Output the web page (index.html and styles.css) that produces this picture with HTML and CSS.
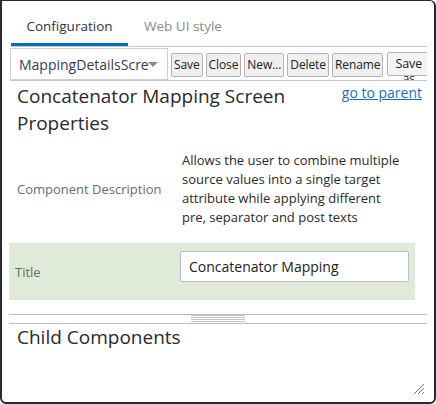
FILE: index.html
```html
<!DOCTYPE html>
<html>
<head>
<meta charset="utf-8">
<link rel="stylesheet" href="styles.css">
</head>
<body>
<div class="window">
  <div class="tabs">
    <div class="tab active">Configuration</div>
    <div class="tab">Web UI style</div>
  </div>
  <div class="toolbar">
    <div class="select">
      <span class="select-text">MappingDetailsScreen</span>
      <span class="select-arrow"></span>
    </div>
    <button class="btn">Save</button>
    <button class="btn">Close</button>
    <button class="btn">New...</button>
    <button class="btn">Delete</button>
    <button class="btn">Rename</button>
    <button class="btn btn-wrap">Save as</button>
  </div>
  <div class="content">
    <a class="parent-link" href="#">go to parent</a>
    <h1 class="heading">Concatenator Mapping Screen Properties</h1>
    <div class="props">
      <div class="prop-row">
        <div class="prop-label">Component Description</div>
        <div class="prop-value">Allows the user to combine multiple source values into a single target attribute while applying different pre, separator and post texts</div>
      </div>
      <div class="prop-row highlight">
        <div class="prop-label label-title">Title</div>
        <div class="prop-value"><div class="input">Concatenator Mapping</div></div>
      </div>
    </div>
  </div>
  <div class="splitter"><div class="grip"></div></div>
  <div class="children">
    <h2 class="heading">Child Components</h2>
  </div>
  <svg class="resize" width="12" height="12" viewBox="0 0 12 12">
    <line x1="11" y1="1" x2="1" y2="11" stroke="#777" stroke-width="1"/>
    <line x1="11" y1="5" x2="5" y2="11" stroke="#777" stroke-width="1"/>
    <line x1="11" y1="9" x2="9" y2="11" stroke="#777" stroke-width="1"/>
  </svg>
</div>
</body>
</html>
```

FILE: styles.css
```css
* { box-sizing: border-box; }
html, body { margin: 0; padding: 0; background: #fff; }
body {
  font-family: "Open Sans", "Noto Sans", sans-serif;
  color: #333;
}
.window {
  position: relative;
  width: 436px;
  height: 404px;
  border: 2px solid #2b2b2b;
  border-top-width: 1px;
  border-radius: 0 6px 6px 6px;
  display: flex;
  flex-direction: column;
  overflow: hidden;
}
.tabs {
  display: flex;
  margin: 0 7px 0 9px;
  height: 46px;
  border-bottom: 1px solid #c8c8c8;
  align-items: flex-end;
}
.tab {
  font-size: 13.5px;
  color: #8a8a8a;
  padding: 0 16px;
  height: 45px;
  line-height: 51px;
  border-bottom: 3px solid transparent;
  white-space: nowrap;
}
.tab.active {
  width: 117px;
  text-align: center;
  color: #333;
  border-bottom-color: #0a6ebd;
  padding: 0;
}
.toolbar {
  display: flex;
  align-items: center;
  gap: 3px;
  margin: 1px 7px 0 8px;
  height: 33px;
  border-bottom: 1px solid #c8c8c8;
  overflow: hidden;
}
.select {
  position: relative;
  flex-shrink: 0;
  width: 158px;
  height: 32px;
  align-self: flex-start;
  border: 1px solid #cfcfcf;
  padding: 0 0 0 8px;
  display: flex;
  align-items: center;
  overflow: hidden;
}
.select-text {
  font-size: 14px;
  color: #2e3f55;
  white-space: nowrap;
  overflow: hidden;
  width: 130px;
}
.select-arrow {
  position: absolute;
  right: 9px;
  top: 13px;
  width: 0;
  height: 0;
  border-left: 5px solid transparent;
  border-right: 5px solid transparent;
  border-top: 5px solid #8a8a8a;
}
.btn {
  flex-shrink: 0;
  font-family: "Open Sans", "Noto Sans", sans-serif;
  font-size: 12px;
  letter-spacing: -0.1px;
  color: #222;
  height: 24px;
  padding: 0 2px;
  background: #efefef;
  border: 1px solid #b4b4b4;
  border-radius: 2px;
  line-height: 20px;
  white-space: nowrap;
  margin-top: 1px;
}
.btn-wrap {
  width: 43px;
  white-space: normal;
  display: flex;
  align-items: flex-start;
  justify-content: center;
  font-size: 12.5px;
  line-height: 15px;
  padding-top: 3px;
  overflow: visible;
  background: #f4f4f4;
  margin-left: 1px;
  margin-top: 0;
}
.content {
  padding: 0 8px 0 7px;
}
.parent-link {
  float: right;
  font-size: 14px;
  color: #1a6fc0;
  text-decoration: underline;
  margin-top: 3px;
  margin-right: 4px;
  line-height: 18px;
}
.heading {
  font-size: 19px;
  font-weight: normal;
  color: #2a2a2a;
  line-height: 27px;
  margin: 2px 0 0 8px;
  width: 300px;
}
.props {
  margin-top: 8px;
  margin-right: 11px;
}
.prop-row {
  display: grid;
  grid-template-columns: 171px 1fr;
  align-items: center;
  padding: 6px 6px 6px 0;
  margin-bottom: 10px;
}
.prop-label {
  font-size: 13px;
  color: #6b6b6b;
  padding-left: 8px;
}
.prop-value {
  font-size: 13px;
  color: #2a2a2a;
  line-height: 19px;
  padding-left: 2px;
  padding-right: 3px;
}
.highlight {
  background: #dfebd8;
  padding: 8px 6px 8px 0;
  margin-bottom: 0;
}
.label-title { padding-left: 6px; }
.highlight .prop-value { padding: 0; }
.input {
  height: 31px;
  margin-bottom: 10px;
  background: #fff;
  border: 1px solid #bdbdbd;
  border-radius: 2px;
  padding: 0 8px;
  font-size: 14px;
  line-height: 29px;
  color: #222;
}
.splitter {
  flex-shrink: 0;
  margin: 14px 7px 0 7px;
  height: 10px;
  border-top: 1px solid #bdbdbd;
  border-bottom: 1px solid #bdbdbd;
  display: flex;
  justify-content: center;
}
.grip {
  width: 54px;
  height: 7px;
  background: repeating-linear-gradient(#c4c4c4 0 1px, transparent 1px 2px);
}
.children {
  padding: 0 8px 0 7px;
}
.children .heading {
  margin-top: 0;
}
.resize {
  position: absolute;
  right: 9px;
  bottom: 7px;
}
```
